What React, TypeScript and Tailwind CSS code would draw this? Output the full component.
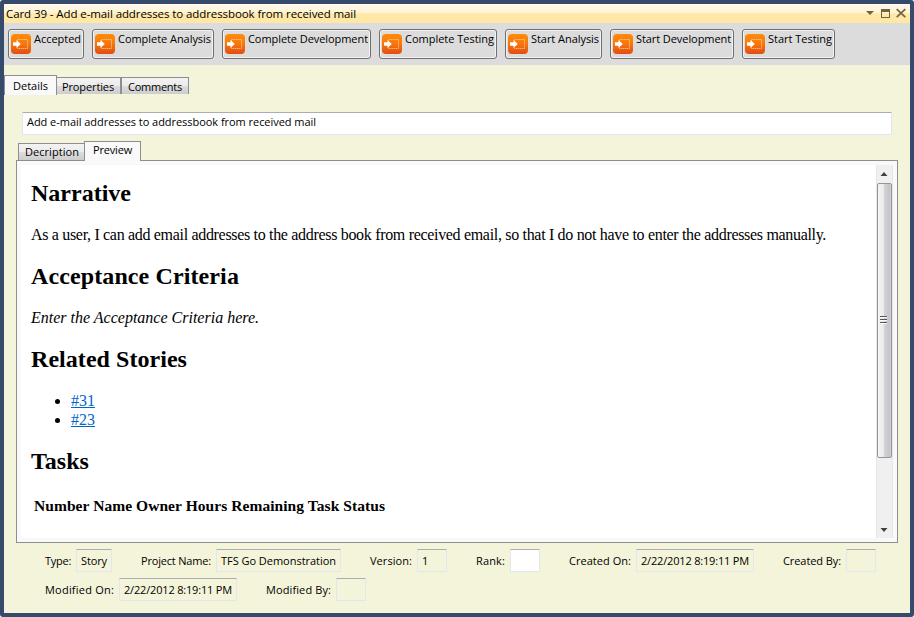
import { useLayoutEffect, useRef, useState } from "react";

/** Single-line text whose tracking is adjusted so that it spans `w` pixels. */
function Fit({ w, children, className = "" }: { w: number; children: string; className?: string }) {
  const ref = useRef<HTMLSpanElement>(null);
  const [spacing, setSpacing] = useState(0);
  useLayoutEffect(() => {
    if (ref.current) {
      const natural = ref.current.getBoundingClientRect().width;
      setSpacing((w - natural) / children.length);
    }
  }, [w, children]);
  return (
    <span ref={ref} className={`inline-block whitespace-pre ${className}`} style={{ letterSpacing: spacing }}>
      {children}
    </span>
  );
}

function MoveIcon() {
  return (
    <svg width="20" height="20" viewBox="0 0 20 20" className="shrink-0">
      <defs>
        <linearGradient id="orange" x1="0" y1="0" x2="0" y2="1">
          <stop offset="0" stopColor="#ff8c08" />
          <stop offset="0.45" stopColor="#f97a0c" />
          <stop offset="1" stopColor="#e24c14" />
        </linearGradient>
      </defs>
      <rect width="20" height="20" rx="4" fill="url(#orange)" />
      <path d="M6.5 7.5V5.5H16.5V14.5H6.5V12.5" fill="none" stroke="#ffc490" strokeWidth="0.8" strokeDasharray="1.5 0.5" />
      <path d="M2 8.3H5.5V6L9.8 10L5.5 14V11.7H2Z" fill="#fff" />
    </svg>
  );
}

const actions = [
  { label: "Accepted", box: "w-[76px]", w: 47 },
  { label: "Complete Analysis", box: "w-[122px]", w: 93 },
  { label: "Complete Development", box: "w-[149px]", w: 120 },
  { label: "Complete Testing", box: "w-[118px]", w: 89 },
  { label: "Start Analysis", box: "w-[97px]", w: 68 },
  { label: "Start Development", box: "w-[124px]", w: 95 },
  { label: "Start Testing", box: "w-[93px]", w: 64 },
];

type FieldProps = { label: string; lw: number; value?: string; vw?: number; box: string; gap: string; white?: boolean };

function Field({ label, lw, value, vw = 0, box, gap, white }: FieldProps) {
  return (
    <div className={`flex h-[23px] items-center ${gap}`}>
      <Fit w={lw}>{label}</Fit>
      <div
        className={`ml-auto flex h-[23px] items-center rounded-[1px] border border-[#e3e6ee] border-t-[#abadb3] pl-1 ${box} ${white ? "bg-white" : ""}`}
      >
        {value && <Fit w={vw}>{value}</Fit>}
      </div>
    </div>
  );
}

function Heading({ w, children }: { w: number; children: string }) {
  return (
    <h2 className="mb-[18px] h-7 text-2xl leading-7 font-bold">
      <Fit w={w}>{children}</Fit>
    </h2>
  );
}

export default function App() {
  return (
    <div className="h-[617px] w-[914px] bg-white font-['Open_Sans','Noto_Sans',sans-serif] text-[11px] leading-4 text-black">
      <div className="flex h-full flex-col overflow-hidden rounded-[3px] border-4 border-[#364a6c] bg-[#f4f4da]">
        <header className="flex h-[19px] shrink-0 items-center rounded-t-[2px] bg-[linear-gradient(#fffaee_0px,#fff3d1_9px,#ffe8a6_10px,#ffe8a6_19px)] pl-[2px]">
          <Fit w={350} className="text-[11.5px]">Card 39 - Add e-mail addresses to addressbook from received mail</Fit>
          <svg width="44" height="19" viewBox="0 0 44 19" className="ml-auto" fill="#75633d">
            <path d="M0 7H8L4 11Z" />
            <path fillRule="evenodd" d="M15 5H24V14H15ZM16 8V13H23V8Z" />
            <path d="M30.7 5.2L39.3 13.2M39.3 5.2L30.7 13.2" stroke="#75633d" strokeWidth="1.7" fill="none" />
          </svg>
        </header>

        <div className="flex h-[42px] shrink-0 gap-2 bg-[#dcdcdc] pt-[6px] pl-1">
          {actions.map((a) => (
            <button
              key={a.label}
              className={`flex h-[30px] shrink-0 rounded-[3px] border border-[#707070] pt-1 pl-[2px] text-left shadow-[inset_0_0_0_1px_#f3f3f3] ${a.box}`}
            >
              <MoveIcon />
              <Fit w={a.w} className="-mt-[3px] ml-[3px]">{a.label}</Fit>
            </button>
          ))}
        </div>

        <nav className="mt-[10px] flex h-5 shrink-0 items-start">
          <div className="h-5 w-[53px] border border-b-0 border-[#8c8e94] bg-[#f9f9f9] pt-[2px] pl-2">
            <Fit w={35}>Details</Fit>
          </div>
          <div className="mt-[2px] h-[17px] w-16 border border-b-0 border-l-0 border-[#8c8e94] bg-[linear-gradient(#f3f3f3,#ebebeb_50%,#dddddd_50%,#cdcdcd)] pt-px pl-[5px]">
            <Fit w={52}>Properties</Fit>
          </div>
          <div className="mt-[2px] h-[17px] w-[68px] border border-b-0 border-[#8c8e94] bg-[linear-gradient(#f3f3f3,#ebebeb_50%,#dddddd_50%,#cdcdcd)] pt-px pl-[6px]">
            <Fit w={54}>Comments</Fit>
          </div>
        </nav>

        <div className="mt-[17px] ml-[18px] flex h-[23px] w-[870px] shrink-0 items-center rounded-[1px] border border-[#e3e6ee] border-t-[#abadb3] bg-white pb-[3px] pl-1">
          <Fit w={289}>Add e-mail addresses to addressbook from received mail</Fit>
        </div>

        <div className="z-10 mt-[6px] -mb-px ml-[14px] flex h-5 shrink-0 items-start">
          <div className="mt-[2px] h-[18px] w-[66px] border border-r-0 border-[#8c8e94] bg-[linear-gradient(#f3f3f3,#ebebeb_50%,#dddddd_50%,#cdcdcd)] pl-[6px]">
            <Fit w={54}>Decription</Fit>
          </div>
          <div className="h-5 w-[57px] border border-b-0 border-[#8c8e94] bg-[#f9f9f9] pl-2">
            <Fit w={39}>Preview</Fit>
          </div>
        </div>

        <section className="ml-3 flex h-[383px] w-[882px] shrink-0 border border-[#8c8e94] bg-[#f9f9f9] p-1">
          <article className="w-[855px] bg-white pt-[14px] pl-[10px] font-['Liberation_Serif',serif] text-base leading-[19px]">
            <Heading w={100}>Narrative</Heading>
            <p className="mb-[18px]">
              <Fit w={795}>As a user, I can add email addresses to the address book from received email, so that I do not have to enter the addresses manually.</Fit>
            </p>
            <Heading w={208}>Acceptance Criteria</Heading>
            <p className="mb-[18px] italic">
              <Fit w={228}>Enter the Acceptance Criteria here.</Fit>
            </p>
            <Heading w={156}>Related Stories</Heading>
            <ul className="mb-[18px] list-disc pl-10 text-black">
              <li><a className="text-[#0066cc] underline">#31</a></li>
              <li><a className="text-[#0066cc] underline">#23</a></li>
            </ul>
            <Heading w={58}>Tasks</Heading>
            <div className="mt-[21px] pl-[3px] font-bold">
              <Fit w={351} className="text-[15.5px]">Number Name Owner Hours Remaining Task Status</Fit>
            </div>
          </article>
          <div className="flex w-[17px] flex-col items-center border-x border-[#e6e6e6] bg-[#f0f0f0] pr-px">
            <svg width="14" height="18" viewBox="0 0 14 18" className="shrink-0"><path d="M7 7L10.5 11H3.5Z" fill="#404040" /></svg>
            <div className="flex h-[275px] w-[15px] shrink-0 items-center justify-center rounded-[2px] border border-[#959595] bg-[linear-gradient(90deg,#f5f5f5,#e9e9eb_45%,#d2d3d6_50%,#c3c4c8_90%,#dcdcdf)]">
              <svg width="8" height="9" viewBox="0 0 8 9" shapeRendering="crispEdges" className="-mt-[2px] -ml-px">
                <path d="M0 1.5H7M0 4.5H7M0 7.5H7" stroke="#555" />
                <path d="M0 2.5H7M0 5.5H7M0 8.5H7" stroke="#f8f8f8" />
              </svg>
            </div>
            <svg width="14" height="18" viewBox="0 0 14 18" className="mt-auto shrink-0"><path d="M3.5 8H10.5L7 12Z" fill="#404040" /></svg>
          </div>
        </section>

        <footer className="mt-[6px] flex flex-col gap-[6px] pl-[41px]">
          <div className="flex">
            <Field label="Type:" lw={26} value="Story" vw={26} box="w-9" gap="w-[67px]" />
            <Field label="Project Name:" lw={70} value="TFS Go Demonstration" vw={115} box="w-[125px]" gap="ml-[29px] w-[200px]" />
            <Field label="Version:" lw={42} value="1" vw={6} box="w-[30px]" gap="ml-[29px] w-[77px]" />
            <Field label="Rank:" lw={29} box="w-[30px]" gap="ml-[29px] w-16" white />
            <Field label="Created On:" lw={62} value="2/22/2012 8:19:11 PM" vw={108} box="w-[118px]" gap="ml-[29px] w-[185px]" />
            <Field label="Created By:" lw={58} box="w-[30px]" gap="ml-[29px] w-[93px]" />
          </div>
          <div className="flex">
            <Field label="Modified On:" lw={69} value="2/22/2012 8:19:11 PM" vw={108} box="w-[118px]" gap="w-[192px]" />
            <Field label="Modified By:" lw={65} box="w-[30px]" gap="ml-[29px] w-[100px]" />
          </div>
        </footer>
      </div>
    </div>
  );
}
